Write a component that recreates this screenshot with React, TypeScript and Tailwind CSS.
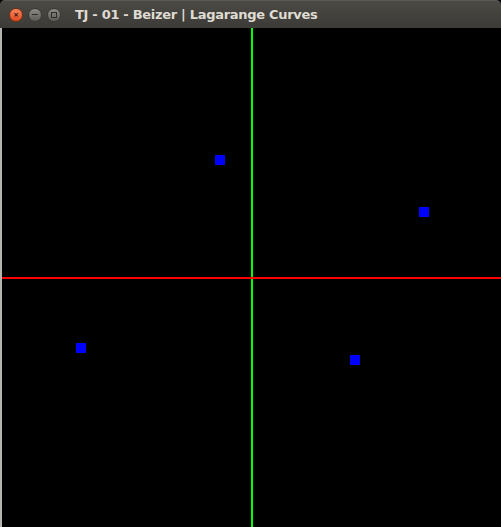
export default function App() {
  const points = [
    { x: 215, y: 127 },
    { x: 419, y: 179 },
    { x: 76, y: 315 },
    { x: 350, y: 327 },
  ];

  return (
    <div className="flex h-[527px] w-[501px] flex-col overflow-hidden bg-black">
      <div className="flex h-[28px] shrink-0 items-center rounded-t-[5px] border-t border-[#5a5954] bg-gradient-to-b from-[#4a4944] to-[#3c3b37] pl-[9px]">
        <div className="flex items-center gap-[5px]">
          <div className="flex h-[14px] w-[14px] items-center justify-center rounded-full border border-[#7a2e12] bg-gradient-to-b from-[#f7875a] to-[#e0481e] text-[9px] font-bold leading-none text-[#3a1a0e]">
            ×
          </div>
          <div className="flex h-[14px] w-[14px] items-center justify-center rounded-full border border-[#3a3935] bg-gradient-to-b from-[#8c8a83] to-[#5e5c56]">
            <div className="h-[1.5px] w-[6px] bg-[#2e2d2a]" />
          </div>
          <div className="flex h-[14px] w-[14px] items-center justify-center rounded-full border border-[#3a3935] bg-gradient-to-b from-[#8c8a83] to-[#5e5c56]">
            <div className="h-[6px] w-[6px] border border-[#2e2d2a]" />
          </div>
        </div>
        <div className="ml-[14px] font-['DejaVu_Sans',sans-serif] text-[13px] font-bold tracking-[-0.3px] text-[#dfdbd2]">
          TJ - 01 - Beizer | Lagarange Curves
        </div>
      </div>
      <div className="flex flex-1">
        <div className="w-[2px] shrink-0 bg-[#b5b4b0]" />
        <svg width={499} height={499} viewBox="2 28 499 499" className="block">
          <rect x={2} y={28} width={499} height={499} fill="#000" />
          <rect x={251} y={28} width={2} height={499} fill="#00ff00" />
          <rect x={2} y={277} width={499} height={2} fill="#ff0000" />
          {points.map((p, i) => (
            <rect key={i} x={p.x} y={p.y + 28} width={10} height={10} fill="#0000ff" />
          ))}
        </svg>
      </div>
    </div>
  );
}
